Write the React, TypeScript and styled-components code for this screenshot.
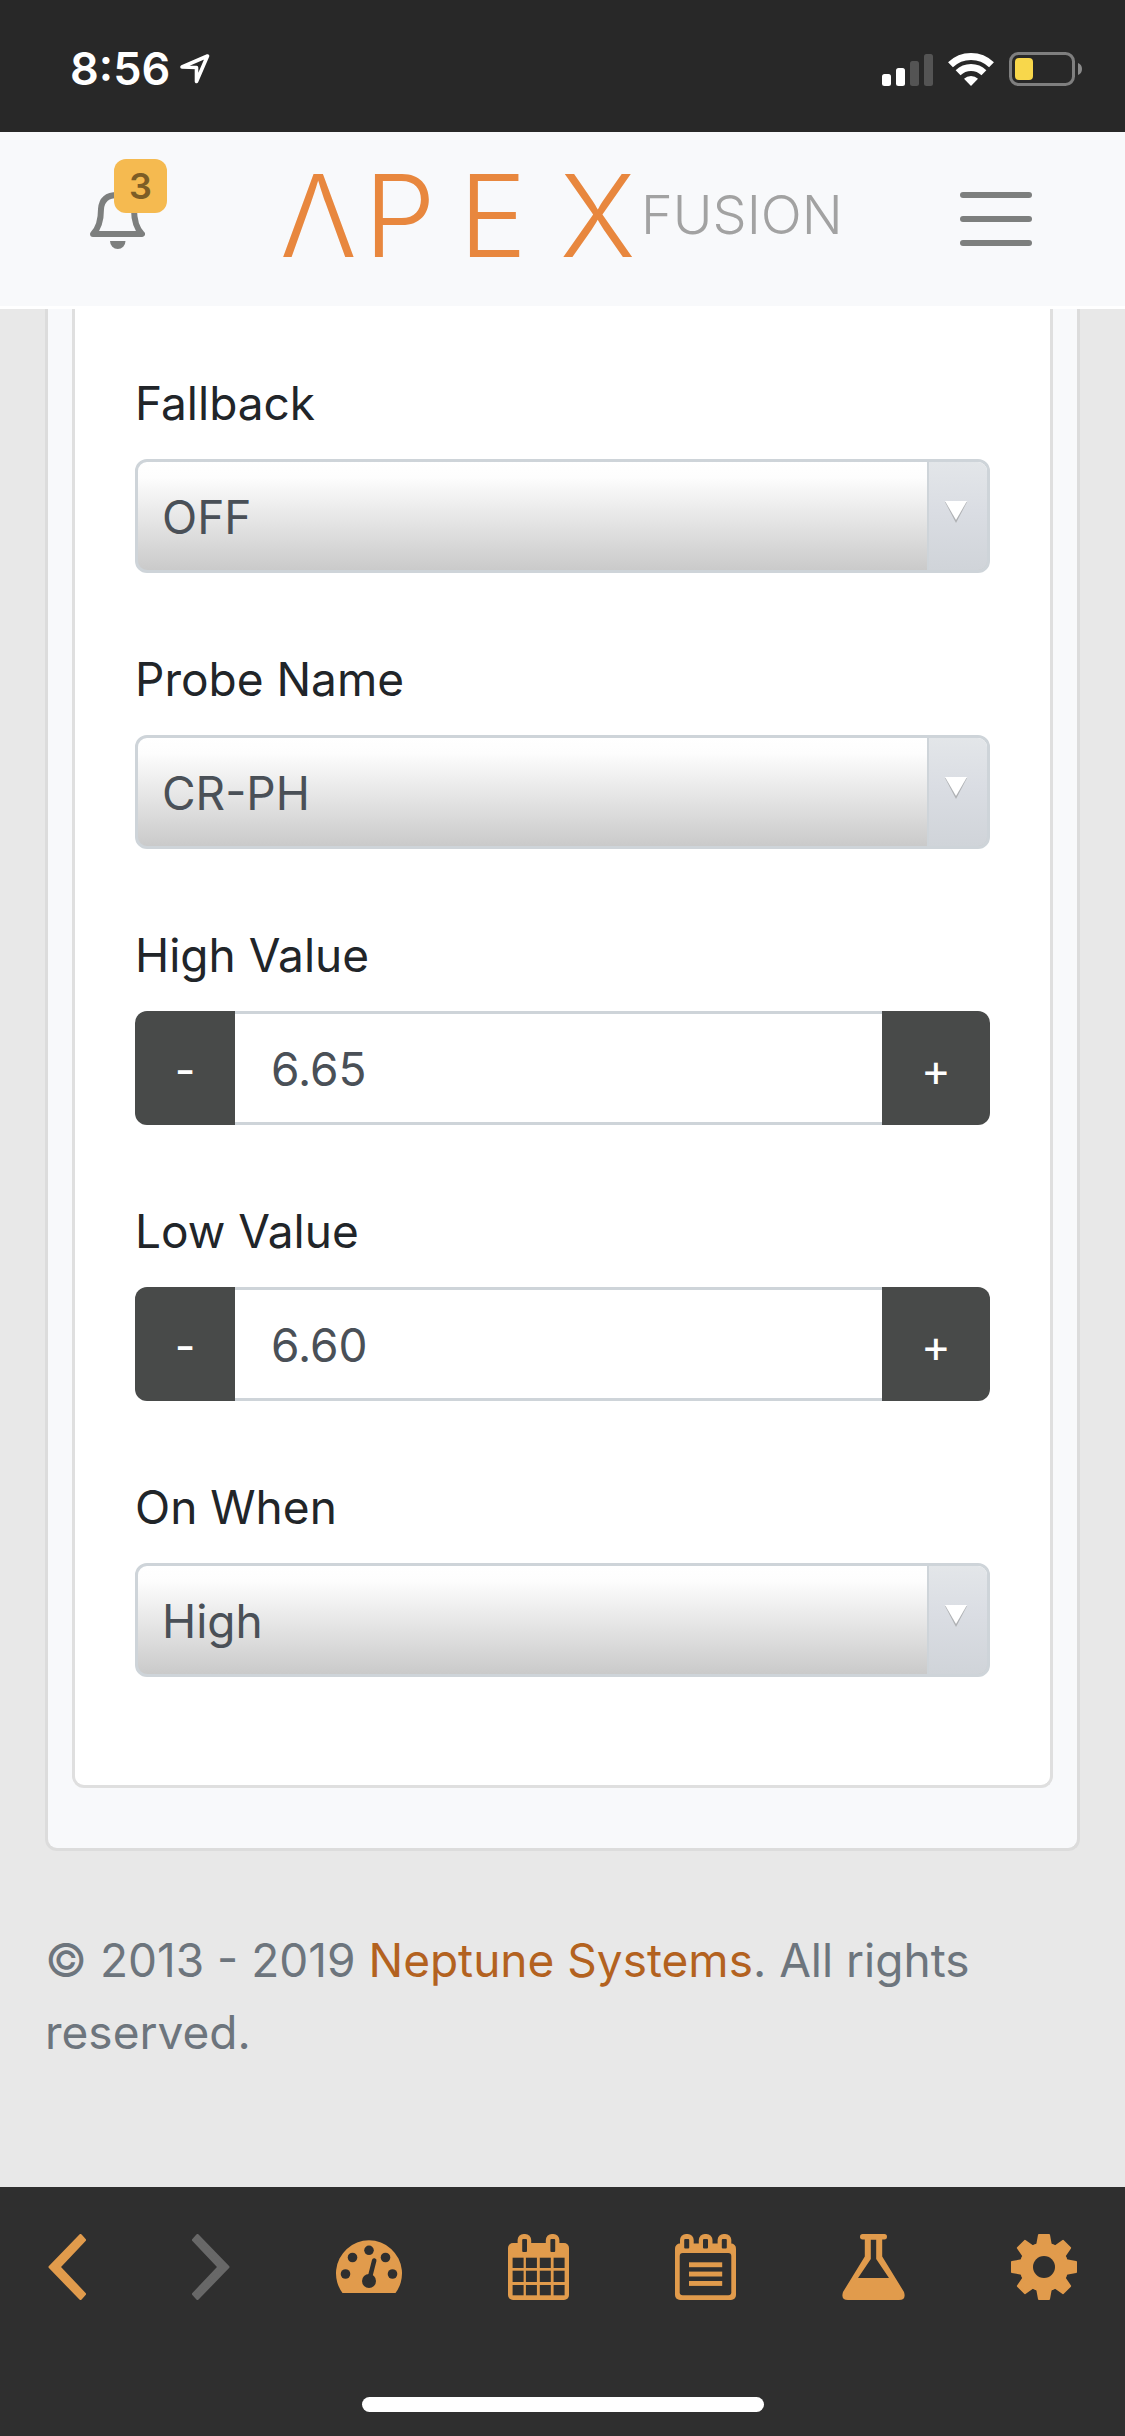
import React, { useId, useState } from "react";
import styled, { createGlobalStyle } from "styled-components";

const font = `Inter, "Liberation Sans", sans-serif`;

const color = {
  orange: "#e19b4c",
  brand: "#e8873e",
  brandGrey: "#a2a2a2",
  icon: "#7d7f7e",
  disabled: "#686868",
  surface: "#f8f9fb",
  page: "#e8e8e8",
  border: "#dcdcdc",
  control: "#ced4d9",
  dark: "#484a49",
  text: "#212529",
  value: "#4a5057",
  muted: "#6d757d",
  link: "#b3621f",
  bar: "#2f2f2f",
};

const GlobalStyle = createGlobalStyle`
  *, *::before, *::after { box-sizing: border-box; }
  body {
    margin: 0;
    background: ${color.page};
    color: ${color.text};
    font-family: ${font};
    font-size: 46px;
    line-height: 72px;
  }
  button, input, select { font: inherit; margin: 0; }
  svg { display: block; }
`;

const Page = styled.div`
  display: flex;
  flex-direction: column;
  min-height: 100vh;
`;

const StatusBar = styled.div`
  display: flex;
  align-items: center;
  justify-content: space-between;
  height: 132px;
  padding: 6px 42px 0 70px;
  background: #282828;
  color: #fff;
`;

const StatusGroup = styled.div<{ $gap: number }>`
  display: flex;
  align-items: center;
  gap: ${(p) => p.$gap}px;
`;

const Time = styled.time`
  font-size: 45px;
  font-weight: 600;
`;

const Header = styled.header`
  display: flex;
  align-items: center;
  justify-content: space-between;
  height: 177px;
  padding: 0 93px 0 90px;
  background: ${color.surface};
  border-bottom: 3px solid #fff;
`;

const IconButton = styled.button<{ $tone?: string }>`
  display: flex;
  padding: 0;
  border: 0;
  background: none;
  color: ${(p) => p.$tone ?? color.orange};
`;

const AlertsButton = styled(IconButton)`
  position: relative;
  width: 77px;
  padding-bottom: 30px;
`;

const Badge = styled.span`
  position: absolute;
  top: 0;
  right: 0;
  width: 53px;
  height: 54px;
  border-radius: 12px;
  background: #f5ba50;
  color: #7c5d26;
  font-size: 36px;
  font-weight: 600;
  line-height: 54px;
  text-align: center;
`;

const LogoLink = styled.a`
  text-decoration: none;
`;

const Mark = styled.text`
  font-family: ${font};
  font-size: 114px;
  font-weight: 300;
  fill: ${color.brand};
`;

const SubMark = styled.text`
  font-family: ${font};
  font-size: 54px;
  font-weight: 300;
  fill: ${color.brandGrey};
`;

const Main = styled.main`
  flex: 1;
  padding: 0 45px 72px;
`;

const Card = styled.section`
  padding: 0 24px 60px;
  border: 3px solid ${color.border};
  border-top: 0;
  border-radius: 0 0 12px 12px;
  background: ${color.surface};
`;

const Form = styled.form`
  display: flex;
  flex-direction: column;
  gap: 70px;
  padding: 58px 60px 108px;
  border: 3px solid #dfdfdf;
  border-top: 0;
  border-radius: 0 0 12px 12px;
  background: #fff;
`;

const Field = styled.div`
  display: flex;
  flex-direction: column;
  gap: 20px;
`;

const SelectFrame = styled.div`
  position: relative;
  display: flex;
`;

const Select = styled.select`
  flex: 1;
  height: 114px;
  padding: 2px 84px 0 24px;
  appearance: none;
  border: 3px solid ${color.control};
  border-radius: 12px;
  background: linear-gradient(#fff 0%, #fdfdfd 14%, #cacaca 100%);
  color: ${color.value};
`;

const Arrow = styled.span`
  position: absolute;
  top: 3px;
  right: 3px;
  bottom: 3px;
  display: flex;
  justify-content: center;
  width: 60px;
  padding: 39px 4px 0 0;
  border-left: 2px solid ${color.control};
  border-radius: 0 9px 9px 0;
  background: linear-gradient(#e3e6e9, #dadde3 45%, #d0d4d9);
  pointer-events: none;
`;

const Stepper = styled.div`
  display: flex;
  height: 114px;
`;

const StepButton = styled.button<{ $side: "left" | "right" }>`
  flex: 0 0 ${(p) => (p.$side === "left" ? 100 : 108)}px;
  padding: 4px 0 0;
  border: 0;
  border-radius: ${(p) => (p.$side === "left" ? "12px 0 0 12px" : "0 12px 12px 0")};
  background: ${color.dark};
  color: #fff;
  font-size: 45px;
`;

const NumberInput = styled.input`
  flex: 1;
  min-width: 0;
  padding: 2px 36px 0;
  border: solid ${color.control};
  border-width: 3px 0;
  border-radius: 0;
  background: #fff;
  color: ${color.value};
`;

const Copyright = styled.p`
  margin: 73px 0 0;
  color: ${color.muted};
`;

const CompanyLink = styled.a`
  color: ${color.link};
  text-decoration: none;
`;

const TabBar = styled.footer`
  display: flex;
  flex-direction: column;
  align-items: center;
  justify-content: space-between;
  height: 249px;
  padding: 47px 48px 24px;
  background: ${color.bar};
`;

const Tabs = styled.nav`
  display: flex;
  align-items: center;
  justify-content: space-between;
  width: 100%;
`;

const HomeIndicator = styled.div`
  width: 402px;
  height: 15px;
  border-radius: 8px;
  background: #fff;
`;

function LocationIcon() {
  return (
    <svg width="30" height="30" viewBox="0 0 30 30" fill="none" stroke="currentColor" strokeWidth="3.6" strokeLinejoin="round">
      <path d="M2 13 27.5 2 16.500 27.500V13.500Z" />
    </svg>
  );
}

function SignalIcon() {
  return (
    <svg width="51" height="33" viewBox="0 0 51 33" fill="#fff">
      <rect x="0" y="21" width="9" height="12" rx="2.500" />
      <rect x="14" y="15" width="9" height="18" rx="2.500" />
      <rect x="28" y="8" width="9" height="25" rx="2.500" fill="#545454" />
      <rect x="42" y="1" width="9" height="32" rx="2.500" fill="#545454" />
    </svg>
  );
}

function WifiIcon() {
  return (
    <svg width="46" height="33" viewBox="0 0 46 33" fill="none" stroke="#fff" strokeWidth="7">
      <path d="M2.500 11.800A29.500 29.500 0 0 1 43.500 11.800" />
      <path d="M10.100 19.700A18.500 18.500 0 0 1 35.900 19.700" />
      <path d="M23 33 16 25.800A10 10 0 0 1 30 25.800Z" fill="#fff" stroke="none" />
    </svg>
  );
}

function BatteryIcon() {
  return (
    <svg width="74" height="34" viewBox="0 0 74 34">
      <rect x="1.500" y="1.500" width="63" height="31" rx="8" fill="none" stroke="#7f7f7f" strokeWidth="3" />
      <rect x="6" y="6" width="18" height="22" rx="4" fill="#f8d74b" />
      <path d="M69 11a6.500 6.500 0 0 1 0 12Z" fill="#8a8a8a" />
    </svg>
  );
}

function BellIcon() {
  return (
    <svg width="55" height="90" viewBox="0 0 55 90">
      <path
        d="M3 75Q11 67 11 50Q12 36 27.500 36Q43 36 44 50Q44 67 52 75Z"
        fill="none"
        stroke="currentColor"
        strokeWidth="6"
        strokeLinejoin="round"
      />
      <path d="M20 82H35.500A7.750 8 0 0 1 20 82Z" fill="currentColor" />
    </svg>
  );
}

function MenuIcon() {
  return (
    <svg width="72" height="54" viewBox="0 0 72 54" fill="currentColor">
      {[0, 24, 48].map((y) => (
        <rect key={y} y={y} width="72" height="6" rx="3" />
      ))}
    </svg>
  );
}

function Logo() {
  return (
    <svg width="568" height="150" viewBox="0 -30 568 150">
      <Mark x="0 84 179 280" y="83">ΛPEX</Mark>
      <SubMark x="361" y="60">FUSION</SubMark>
    </svg>
  );
}

function ChevronIcon({ flip }: { flip?: boolean }) {
  return (
    <svg width="38" height="66" viewBox="0 0 38 66" fill="currentColor" stroke="currentColor" strokeWidth="3" strokeLinejoin="round">
      <polygon
        points="32.500,1.500 36.500,6 11,33 36.500,60 32.500,64.500 2,33"
        transform={flip ? "matrix(-1 0 0 1 38 0)" : undefined}
      />
    </svg>
  );
}

function GaugeIcon() {
  return (
    <svg width="66" height="66" viewBox="0 -7 66 66" fill={color.bar}>
      <path d="M6.500 52A33 33 0 1 1 59.500 52Z" fill="currentColor" />
      <circle cx="33" cy="9.300" r="4.800" />
      <circle cx="16.500" cy="16.500" r="4.800" />
      <circle cx="49.500" cy="16.500" r="4.800" />
      <circle cx="9.500" cy="33" r="4.800" />
      <circle cx="56.500" cy="33" r="4.800" />
      <circle cx="33" cy="40" r="7" />
      <path d="M33.500 38 38.200 19.500" stroke={color.bar} strokeWidth="4.600" strokeLinecap="round" />
    </svg>
  );
}

function CalendarIcon() {
  return (
    <svg width="61" height="66" viewBox="0 0 61 66" fill={color.bar}>
      <g fill="currentColor">
        <rect y="9" width="61" height="57" rx="5" />
        <rect x="9.600" width="13.600" height="24" rx="6" />
        <rect x="37.800" width="13.600" height="24" rx="6" />
      </g>
      <rect x="14.200" y="5" width="4.800" height="13" rx="1" />
      <rect x="42.400" y="5" width="4.800" height="13" rx="1" />
      {[23.700, 36.700, 51].map((y) =>
        [4.600, 17.900, 31.800, 45.600].map((x) => (
          <rect key={`${x}-${y}`} x={x} y={y} width="11" height={y === 36.700 ? 11.300 : 10.300} />
        )),
      )}
    </svg>
  );
}

function NotesIcon() {
  return (
    <svg width="61" height="66" viewBox="0 0 61 66" fill={color.bar}>
      <g fill="currentColor">
        <rect y="9.500" width="61" height="56.500" rx="5" />
        {[5, 23.800, 42.600].map((x) => (
          <rect key={x} x={x} width="13.700" height="18" rx="6" />
        ))}
      </g>
      {[9.200, 28, 46.800].map((x) => (
        <rect key={x} x={x} y="5" width="5" height="9.500" rx="1" />
      ))}
      <rect x="4.700" y="19" width="51.600" height="42.300" rx="3" />
      <g fill="currentColor">
        {[28.300, 37.600, 47].map((y) => (
          <rect key={y} x="14" y={y} width="33.200" height="4.900" />
        ))}
      </g>
    </svg>
  );
}

function FlaskIcon() {
  return (
    <svg width="63" height="66" viewBox="0 0 63 66" fill="currentColor">
      <rect x="18" width="27" height="5.500" rx="2.700" />
      <path
        fillRule="evenodd"
        d="M22.800 4V22.500L1 58Q-1.500 66 6 66H57Q64.500 66 62 58L40.200 22.500V4ZM28.800 5.500V25L16 44H47L34.200 25V5.500Z"
      />
    </svg>
  );
}

function GearIcon() {
  return (
    <svg width="66" height="66" viewBox="0 0 66 66" fill="currentColor">
      <circle cx="33" cy="33" r="24.500" />
      {[0, 45, 90, 135, 180, 225, 270, 315].map((angle) => (
        <polygon
          key={angle}
          points="28,1 38,1 40,12 26,12"
          stroke="currentColor"
          strokeWidth="2"
          strokeLinejoin="round"
          transform={`rotate(${angle} 33 33)`}
        />
      ))}
      <circle cx="33" cy="33" r="11" fill={color.bar} />
    </svg>
  );
}

function SelectField({ label, options }: { label: string; options: string[] }) {
  const id = useId();
  return (
    <Field>
      <label htmlFor={id}>{label}</label>
      <SelectFrame>
        <Select id={id} defaultValue={options[0]}>
          {options.map((o) => (
            <option key={o}>{o}</option>
          ))}
        </Select>
        <Arrow>
          <svg width="22" height="22" viewBox="0 0 22 22">
            <polygon points="0,1 22,1 11,22" fill="#aeb0b3" />
            <polygon points="0,0 22,0 11,19" fill="#fff" />
          </svg>
        </Arrow>
      </SelectFrame>
    </Field>
  );
}

function NumberField({ label, initial }: { label: string; initial: string }) {
  const id = useId();
  const [value, setValue] = useState(initial);
  const step = (delta: number) => setValue((v) => ((Number(v) || 0) + delta).toFixed(2));
  return (
    <Field>
      <label htmlFor={id}>{label}</label>
      <Stepper>
        <StepButton type="button" $side="left" onClick={() => step(-0.05)}>-</StepButton>
        <NumberInput id={id} inputMode="decimal" value={value} onChange={(e) => setValue(e.target.value)} />
        <StepButton type="button" $side="right" onClick={() => step(0.05)}>+</StepButton>
      </Stepper>
    </Field>
  );
}

export default function App() {
  return (
    <Page>
      <GlobalStyle />
      <StatusBar>
        <StatusGroup $gap={10}>
          <Time>8:56</Time>
          <LocationIcon />
        </StatusGroup>
        <StatusGroup $gap={15}>
          <SignalIcon />
          <WifiIcon />
          <BatteryIcon />
        </StatusGroup>
      </StatusBar>
      <Header>
        <AlertsButton type="button" aria-label="Alerts" $tone={color.icon}>
          <BellIcon />
          <Badge>3</Badge>
        </AlertsButton>
        <LogoLink href="#home" aria-label="Apex Fusion">
          <Logo />
        </LogoLink>
        <IconButton type="button" aria-label="Menu" $tone={color.icon}>
          <MenuIcon />
        </IconButton>
      </Header>
      <Main>
        <Card>
          <Form>
            <SelectField label="Fallback" options={["OFF", "ON"]} />
            <SelectField label="Probe Name" options={["CR-PH"]} />
            <NumberField label="High Value" initial="6.65" />
            <NumberField label="Low Value" initial="6.60" />
            <SelectField label="On When" options={["High", "Low"]} />
          </Form>
        </Card>
        <Copyright>
          © 2013 - 2019 <CompanyLink href="#neptune">Neptune Systems</CompanyLink>. All rights reserved.
        </Copyright>
      </Main>
      <TabBar>
        <Tabs>
          <IconButton type="button" aria-label="Back"><ChevronIcon /></IconButton>
          <IconButton type="button" aria-label="Forward" $tone={color.disabled} disabled><ChevronIcon flip /></IconButton>
          <IconButton type="button" aria-label="Dashboard"><GaugeIcon /></IconButton>
          <IconButton type="button" aria-label="Calendar"><CalendarIcon /></IconButton>
          <IconButton type="button" aria-label="Log"><NotesIcon /></IconButton>
          <IconButton type="button" aria-label="Measurements"><FlaskIcon /></IconButton>
          <IconButton type="button" aria-label="Settings"><GearIcon /></IconButton>
        </Tabs>
        <HomeIndicator />
      </TabBar>
    </Page>
  );
}
